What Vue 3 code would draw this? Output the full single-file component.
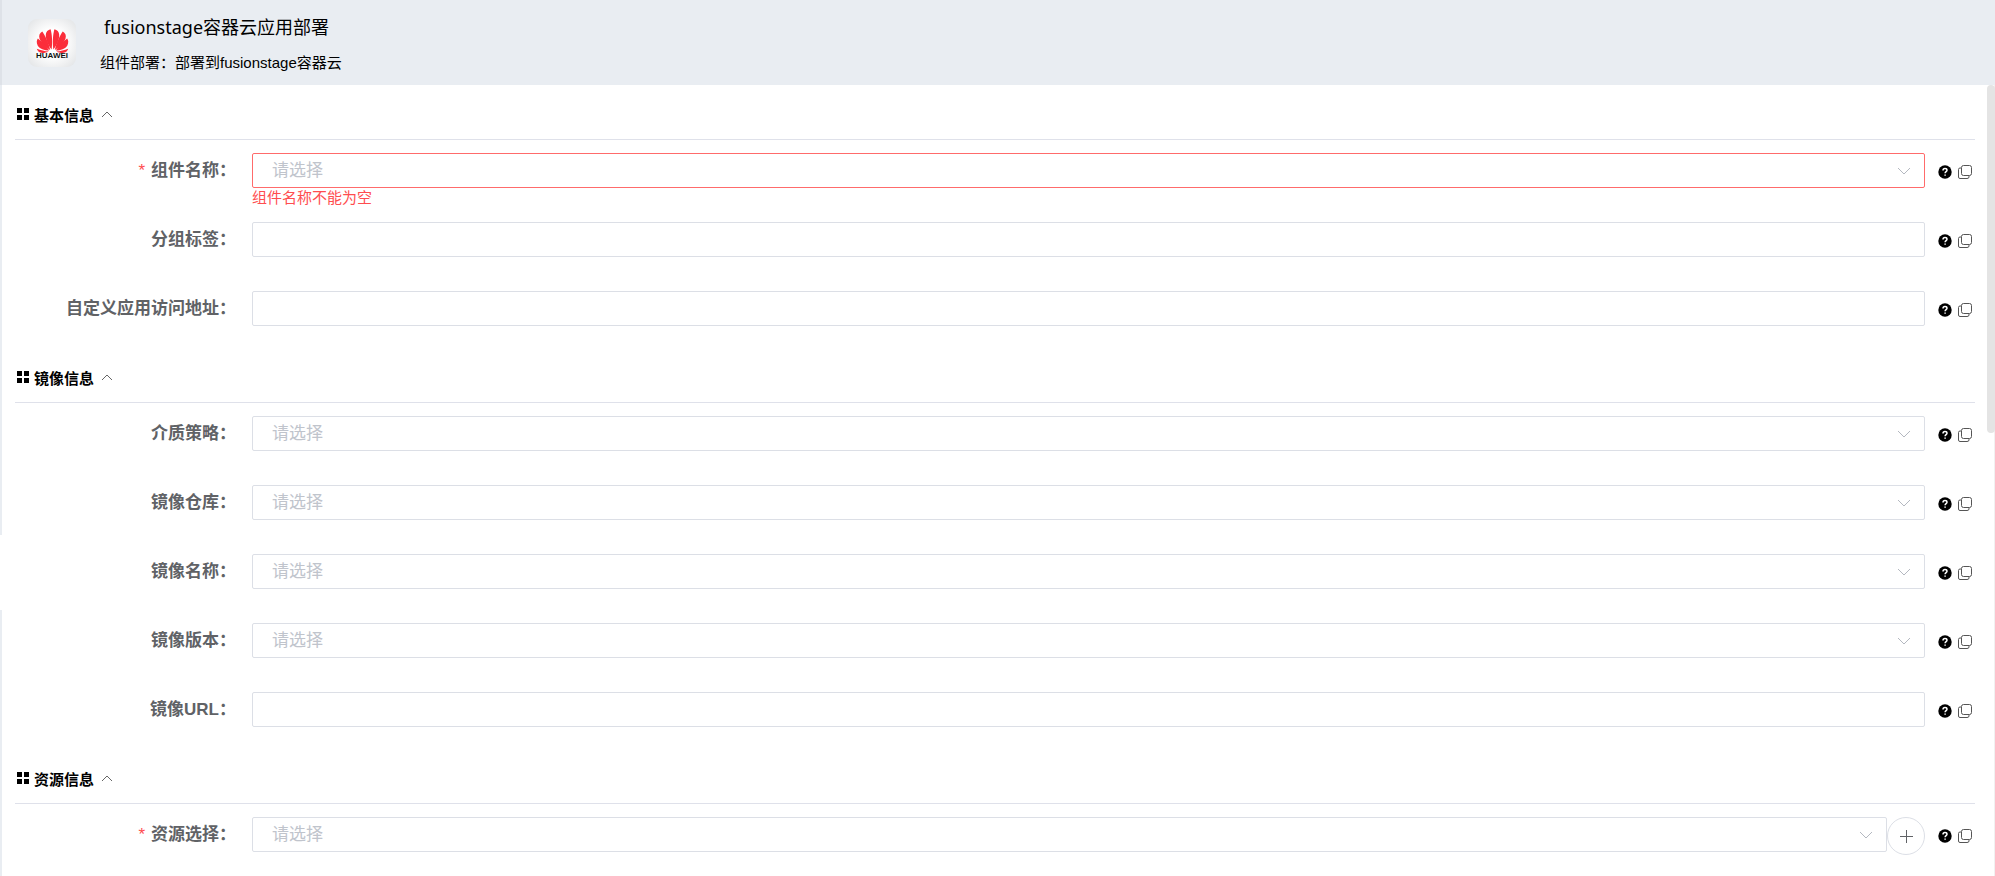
<template>
  <div class="page">
    <div class="rail">
      <div class="rail-head"></div>
      <div class="rail-top"></div>
      <div class="rail-bottom"></div>
    </div>

    <div class="main">
      <header class="header">
        <svg class="logo" viewBox="0 0 48 48" role="img" aria-label="HUAWEI">
          <defs>
            <radialGradient id="logoBg" cx="50%" cy="50%" r="70%">
              <stop offset="40%" stop-color="#ffffff" />
              <stop offset="100%" stop-color="#e0e2e4" />
            </radialGradient>
          </defs>
          <rect width="48" height="48" rx="9" fill="url(#logoBg)" />
          <g fill="#fb2d3a">
            <path d="M23.6 30.5C20.5 26.5 17.6 21 17.8 15.8C17.9 12.6 20 10.7 22.6 10.2C24.2 15.5 24.6 24 23.6 30.5Z" />
            <path d="M22.2 31C18 28.5 13 24 11.5 19.6C10.5 16.3 11.8 14 14.3 12.5C17.8 17.5 21 25 22.2 31Z" />
            <path d="M21.2 31.6C16.5 31.4 11.5 29.7 9.7 26.4C8.3 23.8 8.6 21.3 9.8 19.6C14.5 22.8 18.6 27.4 21.2 31.6Z" />
            <path d="M20.7 32.5C17.5 34 14 34.6 11.7 33.3C10.2 32.5 9.2 31.2 8.8 29.7C12.5 31.2 17 32.2 20.7 32.5Z" />
            <path d="M25.4 30.5C28.5 26.5 31.4 21 31.2 15.8C31.1 12.6 29 10.7 26.4 10.2C24.8 15.5 24.4 24 25.4 30.5Z" />
            <path d="M26.8 31C31 28.5 36 24 37.5 19.6C38.5 16.3 37.2 14 34.7 12.5C31.2 17.5 28 25 26.8 31Z" />
            <path d="M27.8 31.6C32.5 31.4 37.5 29.7 39.3 26.4C40.7 23.8 40.4 21.3 39.2 19.6C34.5 22.8 30.4 27.4 27.8 31.6Z" />
            <path d="M28.3 32.5C31.5 34 35 34.6 37.3 33.3C38.8 32.5 39.8 31.2 40.2 29.7C36.5 31.2 32 32.2 28.3 32.5Z" />
          </g>
          <text class="logo-text" x="24" y="39" text-anchor="middle">HUAWEI</text>
        </svg>
        <div class="header-text">
          <h1>fusionstage容器云应用部署</h1>
          <p>组件部署：部署到fusionstage容器云</p>
        </div>
      </header>

      <div class="body">
        <form class="form" @submit.prevent>
          <section v-for="section in sections" :key="section.title" class="section">
            <h2 class="section-title">
              <button type="button" class="toggle" :aria-expanded="section.open" @click="section.open = !section.open">
                <svg class="grid-icon" viewBox="0 0 12 12" aria-hidden="true">
                  <path d="M0 0h5v5H0zM7 0h5v5H7zM0 7h5v5H0zM7 7h5v5H7z" />
                </svg>
                <span>{{ section.title }}</span>
                <svg class="arrow" :class="{ closed: !section.open }" viewBox="0 0 12 8" aria-hidden="true">
                  <path d="M1 7L6 2L11 7" />
                </svg>
              </button>
            </h2>

            <div v-show="section.open" class="rows">
              <div v-for="field in section.fields" :key="field.id" class="row">
                <label :for="field.id"><span v-if="field.required" class="star">*</span>{{ field.label }}：</label>
                <div class="control">
                  <div v-if="field.type === 'select'" class="select-box">
                    <select :id="field.id" v-model="field.value" :class="{ invalid: field.error }">
                      <option value="" disabled>请选择</option>
                    </select>
                    <svg class="chevron" viewBox="0 0 14 8" aria-hidden="true">
                      <path d="M1 1L7 7L13 1" />
                    </svg>
                  </div>
                  <input v-else :id="field.id" v-model="field.value" type="text">
                  <p v-if="field.error" class="error">{{ field.error }}</p>
                </div>
                <button v-if="field.addable" type="button" class="add" aria-label="新增">
                  <svg viewBox="0 0 13 13" aria-hidden="true"><path d="M6.5 0V13M0 6.5H13" /></svg>
                </button>
                <div class="tools">
                  <button type="button" aria-label="帮助">
                    <svg class="help" viewBox="0 0 14 14" aria-hidden="true">
                      <circle cx="7" cy="7" r="6.7" />
                      <path d="M5 5.6C5 4.3 5.8 3.6 7 3.6C8.2 3.6 9 4.3 9 5.3C9 6.6 7.1 6.7 7.1 8.2M7.1 9.4V10.8" />
                    </svg>
                  </button>
                  <button type="button" aria-label="复制">
                    <svg class="copy" viewBox="0 0 14 14" aria-hidden="true">
                      <rect x="3.5" y="0.5" width="10" height="10" rx="2" />
                      <path d="M3 3H2Q0.5 3 0.5 4.5V12Q0.5 13.5 2 13.5H9Q11 13.5 11 12V11" />
                    </svg>
                  </button>
                </div>
              </div>
            </div>
          </section>
        </form>
        <div class="scrollbar"><div class="thumb"></div></div>
      </div>
    </div>
  </div>
</template>

<script setup>
import { ref } from 'vue';

const sections = ref([
  {
    title: '基本信息',
    open: true,
    fields: [
      { id: 'component', label: '组件名称', type: 'select', value: '', required: true, error: '组件名称不能为空' },
      { id: 'group', label: '分组标签', type: 'text', value: '' },
      { id: 'address', label: '自定义应用访问地址', type: 'text', value: '' }
    ]
  },
  {
    title: '镜像信息',
    open: true,
    fields: [
      { id: 'strategy', label: '介质策略', type: 'select', value: '' },
      { id: 'repository', label: '镜像仓库', type: 'select', value: '' },
      { id: 'image', label: '镜像名称', type: 'select', value: '' },
      { id: 'version', label: '镜像版本', type: 'select', value: '' },
      { id: 'url', label: '镜像URL', type: 'text', value: '' }
    ]
  },
  {
    title: '资源信息',
    open: true,
    fields: [
      { id: 'resource', label: '资源选择', type: 'select', value: '', required: true, addable: true }
    ]
  }
]);
</script>

<style>
body {
  margin: 0;
  background-color: #fff;
}
</style>

<style scoped>
.page {
  display: flex;
  height: 100vh;
  overflow: hidden;
  font-family: 'Liberation Sans', 'Noto Sans CJK SC', sans-serif;
  color: #000;
}

.page * {
  box-sizing: border-box;
}

.rail {
  display: flex;
  flex-direction: column;
  flex: none;
  width: 2px;
}

.rail-head {
  flex: none;
  height: 85px;
  background-color: #dee2e8;
}

.rail-top {
  flex: none;
  height: 450px;
  margin-bottom: 75px;
  background-color: #e9edf2;
}

.rail-bottom {
  flex: 1;
  background-color: #e9edf2;
}

.main {
  display: flex;
  flex-direction: column;
  flex: 1;
  min-width: 0;
}

.header {
  display: flex;
  align-items: center;
  flex: none;
  gap: 24px;
  height: 85px;
  padding-left: 26px;
  background-color: #e9edf2;
}

.logo {
  width: 48px;
  height: 48px;
}

.logo-text {
  font-size: 8px;
  font-weight: bold;
  fill: #111;
}

.header-text {
  display: flex;
  flex-direction: column;
  gap: 12px;
  padding-top: 4px;
}

.header-text h1 {
  margin: 0;
  padding-left: 4px;
  font-family: 'Noto Sans', 'Noto Sans CJK SC', sans-serif;
  font-size: 18px;
  font-weight: normal;
  line-height: 24px;
}

.header-text p {
  margin: 0;
  font-size: 15px;
  line-height: 24px;
}

.body {
  display: flex;
  flex: 1;
  min-height: 0;
}

.form {
  flex: 1;
  min-width: 0;
  padding: 12px 12px 0 13px;
  overflow: hidden;
}

.section-title {
  display: flex;
  height: 43px;
  margin: 0 0 13px;
  border-bottom: 1px solid #dfe1ea;
}

.toggle {
  display: flex;
  align-items: center;
  height: 34px;
  padding: 0 2px;
  border: none;
  background: none;
  color: #000;
  font-family: inherit;
  font-size: 15px;
  font-weight: bold;
  cursor: pointer;
}

.grid-icon {
  width: 12px;
  height: 12px;
  margin-right: 5px;
}

.arrow {
  width: 12px;
  height: 8px;
  margin-left: 7px;
  fill: none;
  stroke: #666;
}

.arrow.closed {
  transform: rotate(180deg);
}

.row {
  display: flex;
  align-items: flex-start;
  height: 69px;
}

.row label {
  flex: none;
  width: 237px;
  padding-right: 16px;
  color: #606266;
  font-size: 17px;
  font-weight: bold;
  line-height: 35px;
  text-align: right;
  white-space: nowrap;
}

.star {
  margin-right: 6px;
  color: #ff4d4f;
  font-weight: normal;
}

.control {
  flex: 1;
  min-width: 0;
}

.select-box {
  position: relative;
}

.control input,
.control select {
  display: block;
  width: 100%;
  height: 35px;
  padding: 0 19px;
  border: 1px solid #dcdfe6;
  border-radius: 2px;
  outline: none;
  background-color: #fff;
  color: #606266;
  font-family: inherit;
  font-size: 17px;
  appearance: none;
}

.control select {
  color: #c0c4cc;
}

.control input:focus,
.control select:focus {
  border-color: #409eff;
}

.control select.invalid {
  border-color: #ff6b6b;
}

.chevron {
  position: absolute;
  top: 14px;
  right: 14px;
  width: 14px;
  height: 8px;
  fill: none;
  stroke: #b4b8c0;
  pointer-events: none;
}

.error {
  margin: 0;
  color: #ff4d4f;
  font-size: 15px;
  line-height: 19px;
}

.add {
  display: flex;
  align-items: center;
  justify-content: center;
  width: 38px;
  height: 38px;
  padding: 0;
  border: 1px solid #dcdfe6;
  border-radius: 50%;
  background-color: #fff;
  cursor: pointer;
}

.add svg {
  width: 13px;
  height: 13px;
  stroke: #606266;
}

.tools {
  display: flex;
  align-items: center;
  flex: none;
  gap: 6px;
  height: 38px;
  padding: 0 3px 0 13px;
}

.tools button {
  display: flex;
  padding: 0;
  border: none;
  background: none;
  cursor: pointer;
}

.tools svg {
  width: 14px;
  height: 14px;
}

.help path {
  fill: none;
  stroke: #fff;
  stroke-width: 1.5;
}

.copy {
  fill: none;
  stroke: #555;
}

.scrollbar {
  flex: none;
  width: 8px;
  border-right: 1px solid #f1f1f1;
}

.thumb {
  width: 8px;
  height: 44%;
  border-radius: 4px;
  background-color: #e4e4e4;
}
</style>
